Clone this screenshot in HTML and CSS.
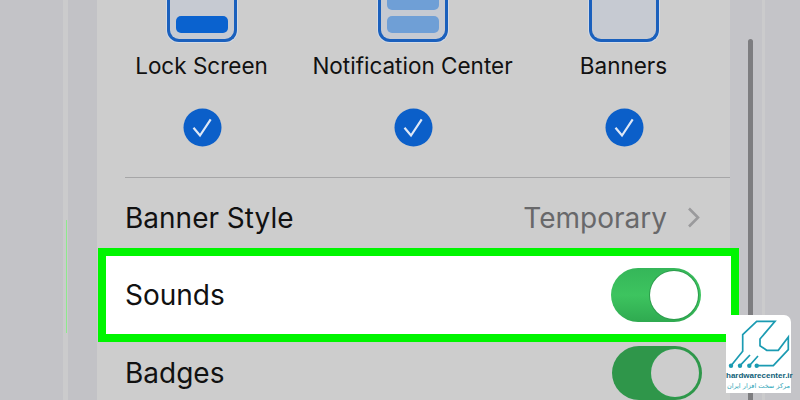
FILE: index.html
```html
<!DOCTYPE html>
<html>
  <head>
    <meta charset="utf-8" />
    <title>Notifications</title>

    <link rel="stylesheet" href="styles.css">
  </head>

  <body>
    <div class="screen">
      <div class="gutter gutter--left">
        <div class="glow-line"></div>
      </div>

      <main class="panel">
        <section class="picker">
          <div class="picker__col">
            <div class="phone">
              <div class="phone__bar phone__bar--solid"></div>
            </div>
            <div class="picker__label">Lock Screen</div>
            <svg class="check" viewBox="0 0 39 39" width="39" height="39">
              <circle cx="19.5" cy="19.5" r="19" fill="#0b5fc9" />
              <path d="M10.5 19.8 L17 27.5 L27.7 11.3" fill="none" stroke="#dfe8f6" stroke-width="2.2" />
            </svg>
          </div>

          <div class="picker__col">
            <div class="phone">
              <div class="phone__bar phone__bar--top"></div>
              <div class="phone__bar"></div>
            </div>
            <div class="picker__label">Notification Center</div>
            <svg class="check" viewBox="0 0 39 39" width="39" height="39">
              <circle cx="19.5" cy="19.5" r="19" fill="#0b5fc9" />
              <path d="M10.5 19.8 L17 27.5 L27.7 11.3" fill="none" stroke="#dfe8f6" stroke-width="2.2" />
            </svg>
          </div>

          <div class="picker__col">
            <div class="phone"></div>
            <div class="picker__label">Banners</div>
            <svg class="check" viewBox="0 0 39 39" width="39" height="39">
              <circle cx="19.5" cy="19.5" r="19" fill="#0b5fc9" />
              <path d="M10.5 19.8 L17 27.5 L27.7 11.3" fill="none" stroke="#dfe8f6" stroke-width="2.2" />
            </svg>
          </div>
        </section>

        <div class="row row--style">
          <span>Banner Style</span>
          <span class="row__value">
            Temporary
            <svg viewBox="0 0 13 21" width="13" height="21">
              <path d="M2 1.5 L11 10.5 L2 19.5" fill="none" stroke="#9a9a9c" stroke-width="2.6" />
            </svg>
          </span>
        </div>

        <div class="row row--sounds">
          <span>Sounds</span>
          <div class="toggle"><div class="toggle__knob"></div></div>
        </div>

        <div class="row row--badges">
          <span>Badges</span>
          <div class="toggle toggle--dim"><div class="toggle__knob"></div></div>
        </div>
      </main>

      <div class="gutter gutter--right">
        <div class="scrollbar"></div>
      </div>

      <div class="logo">
        <svg viewBox="0 0 65 50" width="65" height="50">
          <path d="M5 47.7 L16.7 33.3 V16.7 L30.7 3.3 H49 L34 21 V27.7 L40.7 32.3 H52.3 L62.3 19 V31.7 L47.3 47.7 H30.7" fill="none" stroke="#1b9bb2" stroke-width="1.7" />
          <path d="M14 47.7 L24 37 M23.3 47.7 L32 38" fill="none" stroke="#1b9bb2" stroke-width="1.7" />
          <circle cx="5" cy="47.7" r="2.2" fill="#1b9bb2" />
          <circle cx="14" cy="47.7" r="2.2" fill="#1b9bb2" />
          <circle cx="23.3" cy="47.7" r="2.2" fill="#1b9bb2" />
          <circle cx="30.7" cy="47.7" r="2.2" fill="#1b9bb2" />
        </svg>
        <div class="logo__name">hardwarecenter.ir</div>
        <div class="logo__fa" dir="rtl">مرکز سخت افزار ایران</div>
      </div>
    </div>
  </body>
</html>
```

FILE: styles.css
```css
* {
  box-sizing: border-box;
}

body {
  margin: 0;
  font-family: Inter, 'Liberation Sans', sans-serif;
  color: #111;
}

.screen {
  position: relative;
  display: flex;
  width: 800px;
  height: 400px;
  overflow: hidden;
  background: #c4c4c8;
}

.gutter {
  position: relative;
  flex: none;
}

.gutter--left {
  width: 97px;
  background: linear-gradient(to right, #c3c3c7 63px, #cbcbcc 63px, #cbcbcc 68px, #c2c2c6 68px);
}

.gutter--right {
  width: 70px;
  background: linear-gradient(to right, #c4c4c8 32px, #cbcbcc 32px, #cbcbcc 35px, #c4c4c8 35px);
}

.glow-line {
  position: absolute;
  left: 66px;
  top: 220px;
  width: 1px;
  height: 113px;
  background: #8ee88e;
}

.scrollbar {
  position: absolute;
  left: 18px;
  top: 39px;
  bottom: 0;
  width: 5px;
  border-radius: 3px 3px 0 0;
  background: #7d7d80;
}

/* sits above the right gutter, the green box runs past the panel edge */
.panel {
  position: relative;
  z-index: 1;
  flex: none;
  width: 633px;
  background: #cdcdcd;
}

/* top part with the three phone pictures */
.picker {
  position: relative;
  display: grid;
  grid-template-columns: repeat(3, 211px);
  height: 178px;
  margin-left: -1px;
}

.picker::after {
  content: '';
  position: absolute;
  left: 29px;
  right: 0;
  bottom: 0;
  height: 1px;
  background: #a6a6a7;
}

.picker__col {
  display: flex;
  flex-direction: column;
  align-items: center;
}

.phone {
  display: flex;
  flex-direction: column;
  justify-content: flex-end;
  gap: 6px;
  width: 70px;
  height: 42px;
  padding: 0 6px 6px;
  border: 3px solid #1a60bd;
  border-top: 0;
  border-radius: 0 0 12px 12px;
  background: #c6cad2;
  box-shadow: 0 0 0 1px #d4dbe6;
}

.phone__bar {
  flex: none;
  height: 17px;
  border-radius: 5px;
  background: #6f9fd6;
}

.phone__bar--top {
  height: 10px;
  border-radius: 0 0 5px 5px;
}

.phone__bar--solid {
  background: #0a62cf;
}

.picker__label {
  margin-top: 8px;
  font-size: 22.5px;
  line-height: 32px;
  white-space: nowrap;
}

.check {
  display: block;
  margin-top: 26px;
  margin-left: 2px;
}

.row {
  display: flex;
  align-items: center;
  justify-content: space-between;
  font-size: 28px;
}

.row--style {
  height: 70px;
  padding: 9px 30px 0 28px;
}

.row__value {
  display: flex;
  align-items: center;
  gap: 20px;
  color: #68686a;
}

.row--sounds {
  width: 641px;
  height: 94px;
  margin-left: 1px;
  padding: 0 30px 0 19px;
  border: 8px solid #00f500;
  background: #fff;
}

.row--badges {
  height: 62px;
  padding: 0 28px 0 28px;
}

.toggle {
  flex: none;
  display: flex;
  justify-content: flex-end;
  align-items: center;
  width: 90px;
  height: 54px;
  padding-right: 3px;
  border-radius: 27px;
  background: linear-gradient(to bottom, #35b659, #3dc45f 50%, #2faa50);
}

.toggle__knob {
  width: 48px;
  height: 48px;
  border-radius: 50%;
  background: #fff;
  box-shadow: 0 0 0 1px #2c9c4c;
}

.toggle--dim {
  background: #2f964a;
}

.toggle--dim .toggle__knob {
  background: #cdcdcd;
}

.logo {
  position: absolute;
  z-index: 2;
  left: 726px;
  top: 315px;
  width: 65px;
  height: 78px;
  border-radius: 0 7px 0 0;
  background: #fff;
  text-align: center;
}

.logo svg {
  display: block;
  margin-top: 3px;
}

.logo__name {
  font-family: 'Liberation Sans', sans-serif;
  font-size: 8px;
  font-weight: bold;
  line-height: 11px;
  margin-top: 2px;
  color: #0f6078;
  white-space: nowrap;
}

.logo__fa {
  font-family: 'DejaVu Sans', sans-serif;
  font-size: 6.5px;
  line-height: 11px;
  color: #2fa5b8;
  white-space: nowrap;
}
```
